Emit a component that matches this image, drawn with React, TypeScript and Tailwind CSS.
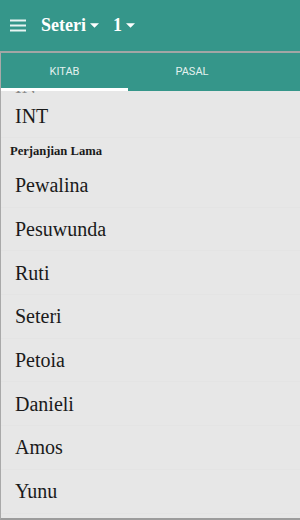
import React from "react";

const serif = { fontFamily: '"Liberation Serif", "DejaVu Serif", serif' };

function Caret() {
  return (
    <svg width="9" height="5" viewBox="0 0 10 5" className="ml-[4px]">
      <path d="M0 0 L10 0 L5 5 Z" fill="#ffffff" />
    </svg>
  );
}

const books = ["Pewalina", "Pesuwunda", "Ruti", "Seteri", "Petoia", "Danieli", "Amos", "Yunu"];

export default function App() {
  return (
    <div className="w-[300px] h-[520px] overflow-hidden bg-[#35968a] flex flex-col">
      <div className="h-[51px] flex items-center pl-[10px] shrink-0">
        <svg width="16" height="13" viewBox="0 0 16 13">
          <rect x="0" y="0.5" width="16" height="2" fill="#e8f4f2" />
          <rect x="0" y="5.5" width="16" height="2" fill="#e8f4f2" />
          <rect x="0" y="10.5" width="16" height="2" fill="#e8f4f2" />
        </svg>
        <div className="flex items-center ml-[15px] text-white font-bold text-[18px]" style={serif}>
          <span>Seteri</span>
          <Caret />
        </div>
        <div className="flex items-center ml-[14px] text-white font-bold text-[18px]" style={serif}>
          <span>1</span>
          <Caret />
        </div>
      </div>
      <div className="h-[2px] bg-[#a2a6a5] shrink-0" />
      <div className="flex-1 flex flex-col border-l border-[#a9a9a9] border-b-2 border-b-[#9c9c9c] min-h-0">
        <div className="h-[38px] flex shrink-0 bg-[#35968a]" style={{ fontFamily: 'Roboto, "Liberation Sans", sans-serif' }}>
          <div className="w-[127px] flex flex-col">
            <div className="flex-1 flex items-center justify-center text-[11px] text-[#e4f1ef] pt-[3px]">KITAB</div>
            <div className="h-[3px] bg-white" />
          </div>
          <div className="w-[128px] flex items-center justify-center text-[11px] text-[#e4f1ef]">PASAL</div>
        </div>
        <div className="flex-1 bg-[#e7e7e7] flex flex-col text-[#1a1a1a] overflow-hidden" style={serif}>
          <div className="h-[3px] overflow-hidden flex items-end pl-[14px] text-[20px] leading-none text-[#888]" aria-hidden="true">
            <span className="-mb-[2px]">IN</span>
          </div>
          <div className="h-[44px] shrink-0 flex items-center pl-[14px] text-[20px] border-b border-[#e4e4e4]">INT</div>
          <div className="h-[26px] shrink-0 flex items-center pl-[9px] text-[12.6px] font-bold">Perjanjian Lama</div>
          {books.map((b) => (
            <div key={b} className="h-[43.7px] shrink-0 flex items-center pl-[14px] text-[20px] border-b border-[#e4e4e4]">
              {b}
            </div>
          ))}
        </div>
      </div>
    </div>
  );
}
